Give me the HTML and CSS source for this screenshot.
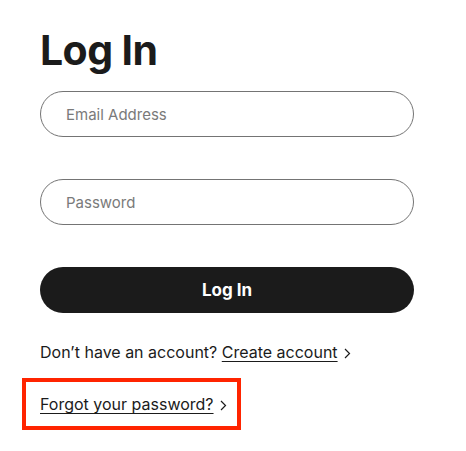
FILE: index.html
```html
<!DOCTYPE html>
<html lang="en">
<head>
    <meta charset="UTF-8">
    <meta name="viewport" content="width=device-width, initial-scale=1.0">
    <title>Log In</title>
    <link rel="stylesheet" href="styles.css">
</head>
<body>
    <div class="login">
        <h1>Log In</h1>
        <form class="login-form">
            <input type="email" class="field" placeholder="Email Address">
            <input type="password" class="field" placeholder="Password">
            <button type="submit" class="submit">Log In</button>
        </form>
        <p class="signup">Don’t have an account? <a href="#" class="link">Create account</a><svg class="chevron" width="7" height="11" viewBox="0 0 7 11"><path d="M1 1l4.5 4.5L1 10" fill="none" stroke="#1b1b1b" stroke-width="1.2"/></svg></p>
        <div class="forgot">
            <a href="#" class="link">Forgot your password?</a><svg class="chevron" width="7" height="11" viewBox="0 0 7 11"><path d="M1 1l4.5 4.5L1 10" fill="none" stroke="#1b1b1b" stroke-width="1.2"/></svg>
        </div>
    </div>
</body>
</html>
```

FILE: styles.css
```css
body {
    margin: 0;
    font-family: Inter, 'Liberation Sans', sans-serif;
    color: #1b1b1b;
    background: #fff;
}
.login {
    width: 374px;
    padding: 22px 0 0 40px;
}
h1 {
    margin: 0;
    font-size: 41px;
    font-weight: 700;
    letter-spacing: -0.6px;
    line-height: 56px;
}
.login-form {
    display: flex;
    flex-direction: column;
    gap: 42px;
    margin-top: 13px;
}
.field {
    box-sizing: border-box;
    height: 46px;
    width: 100%;
    border: 1px solid #747474;
    border-radius: 23px;
    padding: 0 25px;
    font-family: inherit;
    font-size: 15px;
    color: #1b1b1b;
    outline: none;
}
.field::placeholder {
    color: #7a7a7a;
}
.submit {
    height: 46px;
    border: none;
    border-radius: 23px;
    background: #1b1b1b;
    color: #fff;
    font-family: inherit;
    font-size: 17px;
    font-weight: 700;
}
.signup {
    margin: 29px 0 0;
    font-size: 16px;
    line-height: 20px;
}
.link {
    color: #1b1b1b;
    text-decoration: underline;
    text-underline-offset: 3px;
}
.chevron {
    margin-left: 6px;
    vertical-align: -1px;
}
.forgot {
    display: inline-block;
    margin: 16px 0 0 -18px;
    padding: 12px 10px 12px 14px;
    border: 4px solid #ff2400;
    font-size: 16px;
    line-height: 20px;
}
```
